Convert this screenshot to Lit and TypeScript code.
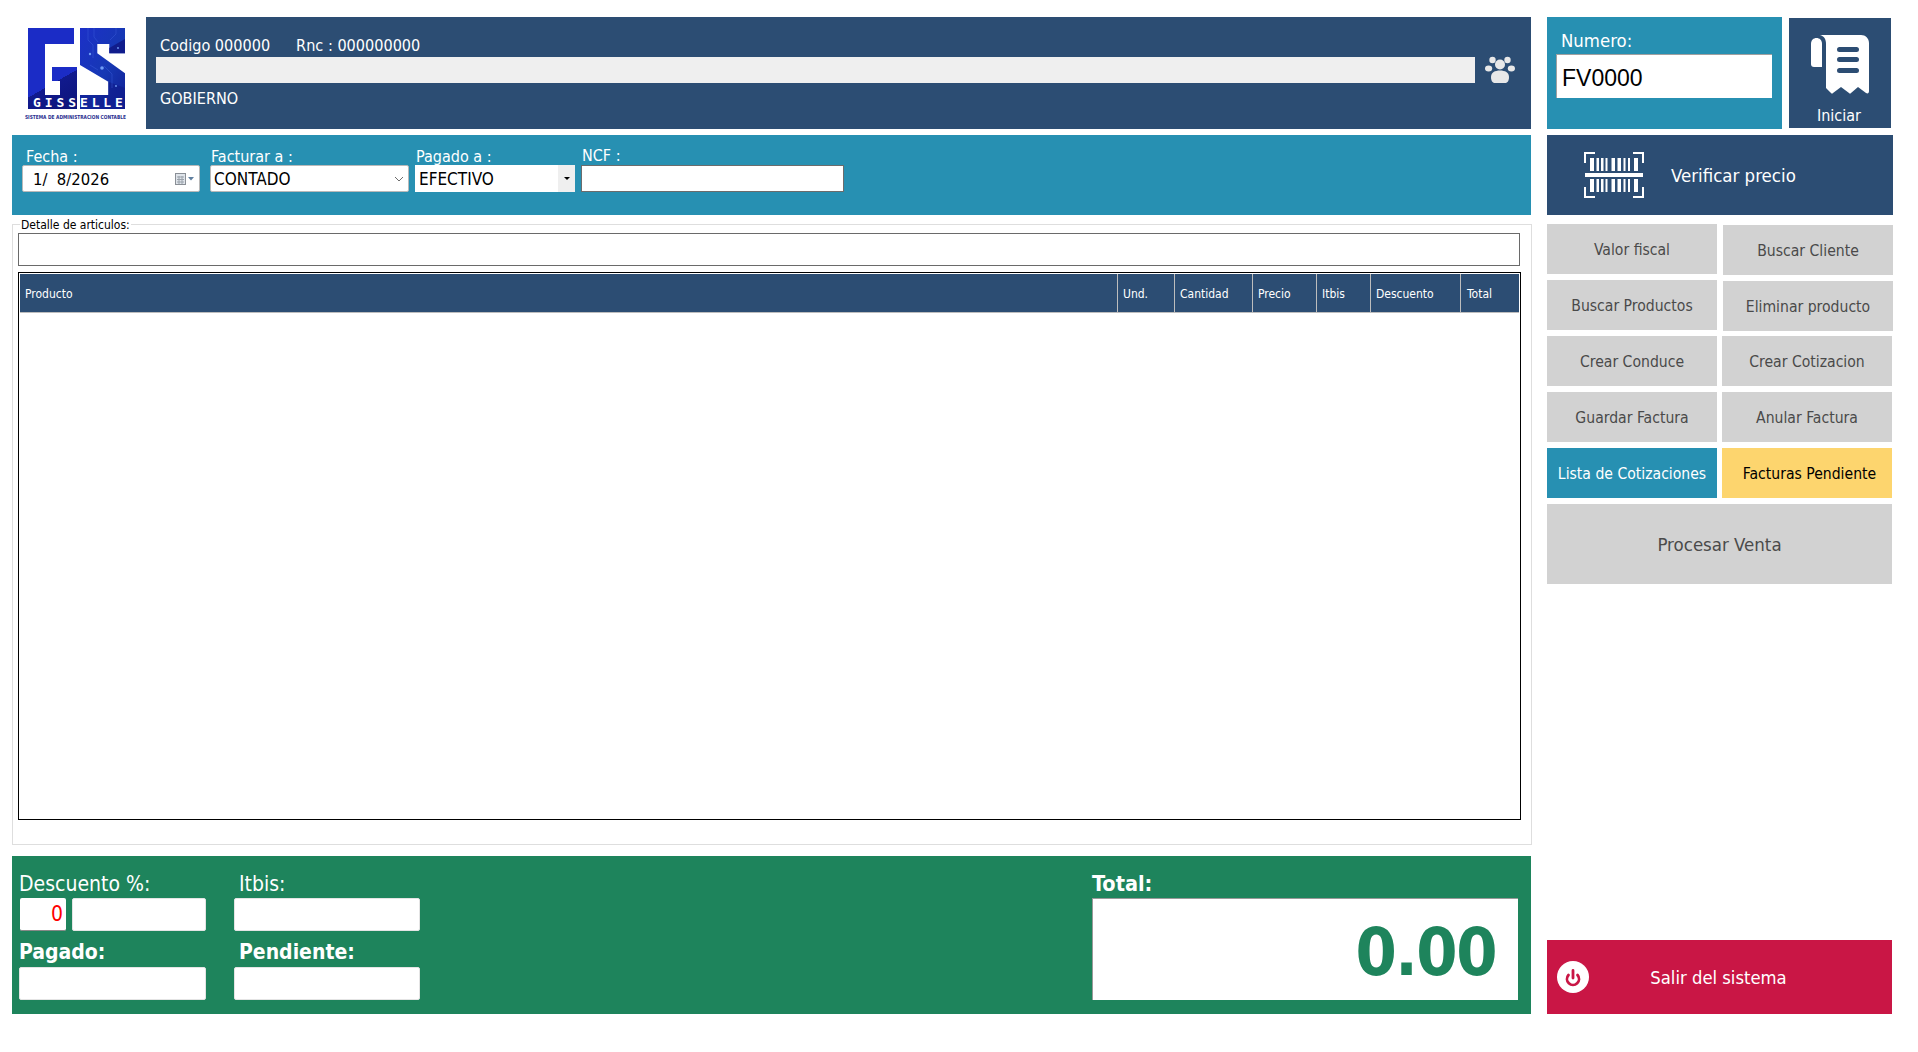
import { LitElement, html, css, svg } from "lit";
import { customElement } from "lit/decorators.js";

const logo = svg`
<svg class="logo" width="112" height="104" viewBox="0 0 112 104">
  <defs>
    <linearGradient id="lg" gradientUnits="userSpaceOnUse" x1="18" y1="41.500" x2="46" y2="90.500">
      <stop offset="0.5" stop-color="#1b2cc6"/><stop offset="0.5" stop-color="#111a8e"/><stop offset="1" stop-color="#0d157c"/>
    </linearGradient>
    <linearGradient id="ls" x1="0" y1="0" x2="1" y2="1">
      <stop offset="0" stop-color="#1c30c8"/><stop offset="0.55" stop-color="#1638b4"/><stop offset="1" stop-color="#111f94"/>
    </linearGradient>
  </defs>
  <path fill="url(#lg)" d="M8 10H54V26H25V77H40V63H32V49H57V91H8Z"/>
  <path fill="url(#ls)" d="M60 10H105V35.300H89.300V26H77.300V35.300L105 55.300V91H60V77H88.300V63.700L60 47Z"/>
  <path fill="#101c8c" d="M89.300 35.300H105V21L89.300 30Z"/>
  <path fill="#0f1a88" d="M88.300 63.700L105 70V91H60V77H88.300Z" opacity="0.6"/>
  <g fill="none" stroke="#3f62e0" stroke-width="0.600" opacity="0.7">
    <path d="M68 10V22L73 27V40M74 10V19L78 24M96 10V16L90 22M84 48L92 56V70M70 47L78 52"/>
  </g>
  <g fill="#6f9cf5"><circle cx="70" cy="36" r="1.200"/><circle cx="82" cy="50" r="1.800"/><circle cx="98" cy="30" r="0.900"/><circle cx="96" cy="68" r="0.900"/></g>
  <text x="13" y="89.300" class="lt">GISSELLE</text>
  <text x="5" y="101" class="ls" textLength="101" lengthAdjust="spacingAndGlyphs">SISTEMA DE ADMINISTRACION CONTABLE</text>
</svg>`;

const paw = svg`
<svg width="30" height="28" viewBox="0 0 30 28" fill="#e8e8e8">
  <circle cx="15" cy="8.500" r="5"/><circle cx="7.500" cy="4" r="3.200"/><circle cx="22.500" cy="4" r="3.200"/>
  <ellipse cx="3.600" cy="12.500" rx="3.600" ry="3"/><ellipse cx="26.400" cy="12.500" rx="3.600" ry="3"/>
  <path d="M6 21C6 16.500 10 14.500 15 14.500S24 16.500 24 21C24 25.500 22 27 20 27H10C8 27 6 25.500 6 21Z"/>
</svg>`;

const receipt = svg`
<svg width="60" height="60" viewBox="0 0 60 60" fill="#fff">
  <path d="M1 9C1 5 3.500 3 6.500 3C9.500 3 12 5 12 9V32H4C2 32 1 31 1 29Z"/>
  <path fill-rule="evenodd" d="M10 0H51C55.500 0 59 3.500 59 8V56C59 58 58 59 56 58L48 52L41 58C40 59 40 59 39 58L31 52L23 58C22 59 22 59 21 58L16 53V9C16 4 14 1 10 0ZM29.500 12A2.500 2.500 0 0 0 29.500 17H46.500A2.500 2.500 0 0 0 46.500 12ZM29.500 22A2.500 2.500 0 0 0 29.500 27H46.500A2.500 2.500 0 0 0 46.500 22ZM29.500 33A2.500 2.500 0 0 0 29.500 38H46.500A2.500 2.500 0 0 0 46.500 33Z"/>
</svg>`;

const bars = (y: number, h: number) => {
  const xs: [number, number][] = [[6, 4], [12.500, 2.500], [17, 2.500], [21.500, 2], [27.500, 3.500], [33.500, 3.500], [39.500, 2], [44, 2], [50, 4]];
  return xs.map(([x, w]) => svg`<rect x=${x} y=${y} width=${w} height=${h}/>`);
};
const barcode = svg`
<svg width="60" height="46" viewBox="0 0 60 46" fill="#fff">
  <path fill="none" stroke="#fff" stroke-width="2" d="M11 1H1V11M49 1H59V11M11 45H1V35M49 45H59V35"/>
  ${bars(6, 13)}
  <rect x="1" y="21" width="58" height="4"/>
  ${bars(27, 13)}
</svg>`;

const power = svg`
<svg width="32" height="32" viewBox="0 0 32 32">
  <circle cx="16" cy="16" r="16" fill="#fff"/>
  <path fill="none" stroke="#c91645" stroke-width="2.800" stroke-linecap="round" d="M11.500 14A6 6 0 1 0 20.500 14M16 9.500V17"/>
</svg>`;

const calendar = svg`
<svg width="22" height="14" viewBox="0 0 22 14">
  <rect x="1.500" y="1.500" width="10" height="11" fill="#dfe4ea" stroke="#8a8f96"/>
  <path stroke="#9aa2ab" d="M3 5H10M3 7.500H10M3 10H10M5 4V12M8 4V12" fill="none"/>
  <path d="M14 5H20L17 8.500Z" fill="#5f7f9f"/>
</svg>`;

const chevron = svg`
<svg width="10" height="6" viewBox="0 0 10 6"><path d="M1 1L5 5L9 1" fill="none" stroke="#6d6d6d"/></svg>`;

@customElement("app-root")
export class AppRoot extends LitElement {
  static styles = css`
    :host {
      display: block;
      width: 1918px;
      height: 1052px;
      background: #fff;
      overflow: hidden;
      font-family: "DejaVu Sans Condensed", "DejaVu Sans", sans-serif;
      font-stretch: condensed;
      color: #fff;
    }
    .page {
      display: grid;
      grid-template-columns: 1519px 346px;
      column-gap: 16px;
      padding: 17px 0 0 12px;
      height: 1014px;
    }
    .main { display: flex; flex-direction: column; height: 997px; }
    .side { display: flex; flex-direction: column; height: 997px; }

    .top { display: flex; height: 112px; }
    .logo-box { width: 134px; flex: none; }
    .logo { display: block; margin: 1px 0 0 8px; overflow: visible; }
    .lt { font: 700 13px "DejaVu Sans Mono", monospace; fill: #fff; letter-spacing: 3.900px; }
    .ls { font: 700 5.500px "DejaVu Sans Condensed", "DejaVu Sans", sans-serif; fill: #2a2f8f; }
    .client {
      flex: 1;
      background: #2c4d73;
      padding: 1px 0 0 14px;
      font-size: 16.100px;
      display: flex;
      flex-direction: column;
    }
    .client-line { display: flex; gap: 26px; height: 39px; align-items: flex-end; padding-bottom: 2px; box-sizing: border-box; }
    .client-name { display: flex; align-items: center; margin-left: -4px; height: 26px; }
    .name-input { width: 1319px; height: 26px; background: #efefef; flex: none; }
    .paw { display: flex; margin-left: 10px; }
    .client-type { margin-top: 3px; line-height: 26px; }

    .filters {
      margin-top: 6px;
      height: 80px;
      background: #2790b2;
      display: flex;
      align-items: flex-start;
      padding-left: 10px;
      box-sizing: border-box;
      font-size: 16px;
      flex: none;
    }
    .f { display: flex; flex-direction: column; }
    .f label { padding-left: 4px; line-height: 17px; margin-top: 13px; height: 17px; }
    .f.tight label { padding-left: 1px; }
    .ctl {
      height: 27px;
      box-sizing: border-box;
      background: #fff;
      color: #000;
      display: flex;
      align-items: center;
      justify-content: space-between;
      font-size: 17px;
      padding-top: 1px;
    }
    .date { width: 178px; border: 1px solid #b9b9b9; border-radius: 2px; padding: 1px 3px 0 10px; margin-right: 10px; font-size: 16.500px; }
    .date svg { margin-left: -4px; }
    .combo { width: 199px; border: 1px solid #b9b9b9; border-radius: 2px; padding: 1px 4px 0 3px; margin-right: 6px; }
    .drop { width: 160px; padding: 0 0 0 4px; margin-right: 6px; }
    .drop span { padding-top: 1px; }
    .arrow-box { width: 17px; height: 100%; background: #efefef; display: flex; align-items: center; justify-content: center; }
    .arrow-box i { border: 3px solid transparent; border-top: 3px solid #000; border-bottom: 0; }
    .ncf { width: 263px; border: 1px solid #6c6c6c; }
    .f.n label { margin-top: 12px; height: 18px; padding-left: 1px; }

    fieldset {
      margin: 9px 0 0;
      padding: 0 10px 0 5px;
      border: 1px solid #dedede;
      height: 621px;
      box-sizing: border-box;
      flex: none;
      position: relative;
      display: flex;
      flex-direction: column;
    }
    .legend {
      position: absolute;
      left: 7px;
      top: -7px;
      padding: 0 1px;
      background: #fff;
      color: #000;
      font-size: 12px;
      line-height: 14px;
    }
    .desc { height: 33px; box-sizing: border-box; border: 1px solid #6a6a6a; margin: 8px 1px 0 0; flex: none; }
    .grid { margin-top: 6px; height: 548px; border: 1px solid #000; box-sizing: border-box; padding: 1px; width: 1503px; flex: none; }
    .thead { display: grid; grid-template-columns: 1097px 57px 78px 64px 54px 90px 1fr; height: 39px; background: #2c4d73; border-bottom: 1px solid #bdbdbd; box-sizing: border-box; font-size: 12px; }
    .thead div { display: flex; align-items: center; padding: 1px 0 0 5px; box-sizing: border-box; border-left: 1px solid #bdbdbd; }
    .thead div:first-child { border-left: 0; }
    .thead div:last-child { padding-left: 6px; }

    .totals {
      margin-top: 11px;
      height: 158px;
      background: #1e845c;
      flex: none;
      display: flex;
      justify-content: space-between;
      padding: 0 13px 0 7px;
      box-sizing: border-box;
    }
    .t-left { display: grid; grid-template-columns: 187px 186px; grid-auto-rows: min-content; column-gap: 28px; }
    .t-cell { display: flex; flex-direction: column; }
    .t-cell label { font-size: 21px; line-height: 28px; }
    .t-cell.first label { margin-top: 14px; height: 28px; }
    .t-cell.ind label { padding-left: 5px; }
    .t-cell.second label { height: 36px; line-height: 42px; font-weight: 700; }
    .white { height: 33px; background: #fff; border-radius: 2px; border: 1px solid #e4e4e4; box-sizing: border-box; }
    .pair { display: flex; gap: 6px; }
    .pct { width: 46px; height: 33px; background: #fff; color: #f00; font-size: 21px; display: flex; justify-content: flex-end; align-items: center; padding-right: 3px; box-sizing: border-box; margin-left: 1px; border-bottom: 1px solid #888; border-radius: 2px; }
    .pair .white { width: 134px; }
    .t-right { width: 426px; display: flex; flex-direction: column; }
    .t-right label { font-size: 21.500px; font-weight: 700; margin-top: 14px; height: 28px; line-height: 28px; }
    .total-box { height: 102px; background: #fff; border-top: 1px solid #999; border-left: 1px solid #999; box-sizing: border-box; color: #1e845c; font-size: 66px; letter-spacing: -1.500px; font-weight: 700; text-align: right; padding-right: 22px; line-height: 108px; }

    .side-top { display: flex; height: 112px; flex: none; }
    .numero { width: 235px; background: #2790b2; font-size: 18.400px; padding: 0 0 0 9px; box-sizing: border-box; }
    .numero span { display: block; height: 37px; line-height: 26px; padding: 11px 0 0 5px; box-sizing: border-box; }
    .numero div { width: 216px; height: 44px; box-sizing: border-box; background: #fff; border-top: 1px solid #a0a0a0; border-left: 1px solid #a0a0a0; color: #000; font: 23px/46px "Liberation Sans", sans-serif; padding-left: 5px; }
    .iniciar { width: 102px; height: 110px; margin: 1px 0 0 7px; background: #2c4d73; display: flex; flex-direction: column; align-items: center; font-size: 16px; }
    .iniciar svg { margin-top: 17px; }
    .iniciar span { margin-top: 12px; line-height: 18px; margin-right: 2px; }
    .verify { margin-top: 6px; height: 80px; background: #2c4d73; display: flex; align-items: center; padding-left: 37px; font-size: 18.500px; flex: none; gap: 27px; }
    .buttons { display: flex; flex-direction: column; margin-top: 9px; gap: 6px; flex: none; }
    .row { display: grid; grid-template-columns: 170px 170px; column-gap: 5px; height: 50px; }
    .btn { height: 50px; background: #d2d2d2; color: #4a4a4a; display: flex; align-items: center; justify-content: center; font-size: 15.600px; padding-top: 1px; box-sizing: border-box; }
    .row.shift { column-gap: 6px; }
    .row.shift .btn:nth-child(2) { margin-top: 1px; }
    .btn.teal { background: #2790b2; color: #fff; }
    .btn.yellow { background: #fdd56e; color: #000; padding-left: 5px; }
    .process { height: 80px; background: #d2d2d2; color: #4a4a4a; font-size: 18.500px; display: flex; align-items: center; justify-content: center; width: 345px; flex: none; }
    .exit { margin-top: auto; width: 345px; height: 74px; background: #c91645; display: flex; align-items: center; flex: none; font-size: 18.300px; padding-left: 10px; box-sizing: border-box; }
    .exit span { flex: 1; text-align: center; padding-right: 44px; }
  `;

  render() {
    const cols = ["Producto", "Und.", "Cantidad", "Precio", "Itbis", "Descuento", "Total"];
    return html`
      <div class="page">
        <div class="main">
          <div class="top">
            <div class="logo-box">${logo}</div>
            <div class="client">
              <div class="client-line"><span>Codigo 000000</span><span>Rnc : 000000000</span></div>
              <div class="client-name"><div class="name-input"></div><div class="paw">${paw}</div></div>
              <div class="client-type">GOBIERNO</div>
            </div>
          </div>
          <div class="filters">
            <div class="f"><label>Fecha :</label><div class="ctl date"><span>1/&nbsp; 8/2026</span>${calendar}</div></div>
            <div class="f tight"><label>Facturar a :</label><div class="ctl combo"><span>CONTADO</span>${chevron}</div></div>
            <div class="f tight"><label>Pagado a :</label><div class="ctl drop"><span>EFECTIVO</span><div class="arrow-box"><i></i></div></div></div>
            <div class="f n"><label>NCF :</label><div class="ctl ncf"></div></div>
          </div>
          <fieldset>
            <div class="legend">Detalle de articulos:</div>
            <div class="desc"></div>
            <div class="grid">
              <div class="thead">${cols.map((c) => html`<div>${c}</div>`)}</div>
            </div>
          </fieldset>
          <div class="totals">
            <div class="t-left">
              <div class="t-cell first"><label>Descuento %:</label><div class="pair"><div class="pct">0</div><div class="white"></div></div></div>
              <div class="t-cell first ind"><label>Itbis:</label><div class="white"></div></div>
              <div class="t-cell second"><label>Pagado:</label><div class="white"></div></div>
              <div class="t-cell second ind"><label>Pendiente:</label><div class="white"></div></div>
            </div>
            <div class="t-right"><label>Total:</label><div class="total-box">0.00</div></div>
          </div>
        </div>
        <div class="side">
          <div class="side-top">
            <div class="numero"><span>Numero:</span><div>FV0000</div></div>
            <div class="iniciar">${receipt}<span>Iniciar</span></div>
          </div>
          <div class="verify">${barcode}<span>Verificar precio</span></div>
          <div class="buttons">
            <div class="row shift"><div class="btn">Valor fiscal</div><div class="btn">Buscar Cliente</div></div>
            <div class="row shift"><div class="btn">Buscar Productos</div><div class="btn">Eliminar producto</div></div>
            <div class="row"><div class="btn">Crear Conduce</div><div class="btn">Crear Cotizacion</div></div>
            <div class="row"><div class="btn">Guardar Factura</div><div class="btn">Anular Factura</div></div>
            <div class="row"><div class="btn teal">Lista de Cotizaciones</div><div class="btn yellow">Facturas Pendiente</div></div>
            <div class="process">Procesar Venta</div>
          </div>
          <div class="exit">${power}<span>Salir del sistema</span></div>
        </div>
      </div>
    `;
  }
}
